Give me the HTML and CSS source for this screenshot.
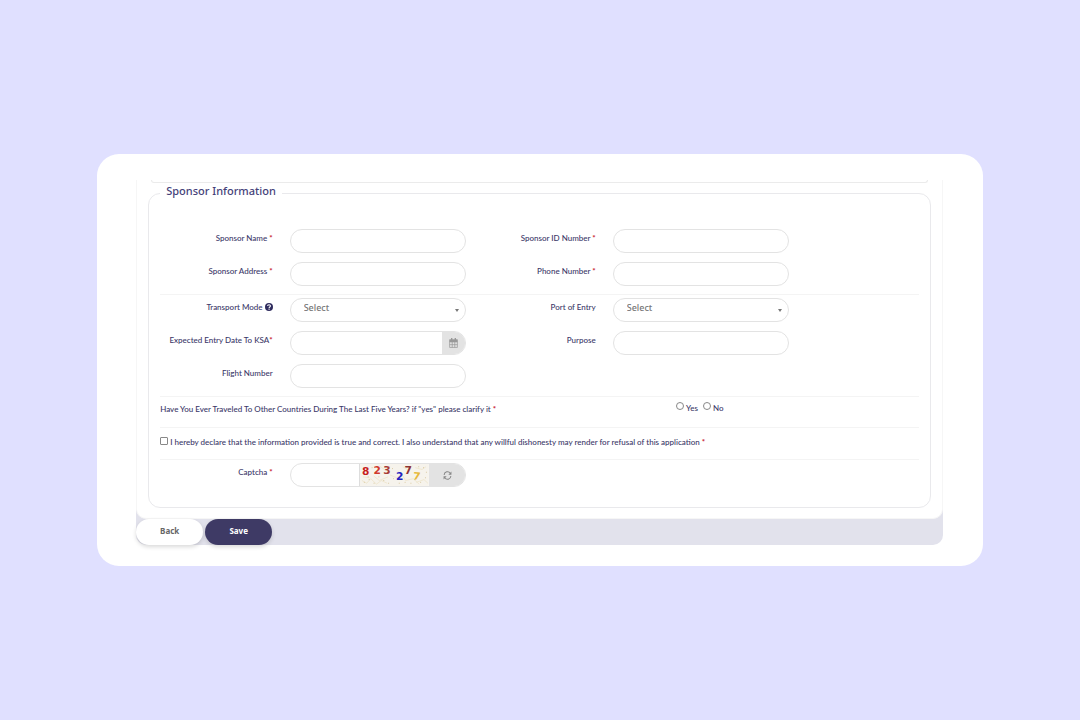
FILE: index.html
```html
<!DOCTYPE html>
<html lang="en">
<head>
    <meta charset="UTF-8">
    <meta name="viewport" content="width=device-width, initial-scale=1.0">
    <title>Sponsor Information</title>
    <link rel="stylesheet" href="styles.css">
</head>
<body>
    <main class="card">
        <form class="form-wrapper">
            <div class="panel">
                <div class="previous-section"></div>
                <fieldset class="section">
                    <legend>Sponsor Information</legend>

                    <div class="form-grid">
                        <label for="sponsor-name">Sponsor Name <span class="required">*</span></label>
                        <input type="text" id="sponsor-name" class="field">
                        <label for="sponsor-id">Sponsor ID Number <span class="required">*</span></label>
                        <input type="text" id="sponsor-id" class="field">

                        <label for="sponsor-address" class="first">Sponsor Address <span class="required">*</span></label>
                        <input type="text" id="sponsor-address" class="field">
                        <label for="phone">Phone Number <span class="required">*</span></label>
                        <input type="text" id="phone" class="field">
                    </div>

                    <div class="form-grid divided">
                        <label for="transport">Transport Mode
                            <svg class="help-icon" viewBox="0 0 16 16" aria-hidden="true">
                                <circle cx="8" cy="8" r="8" fill="#2f2c5e"/>
                                <path d="M5.2 6.2C5.3 2.8 10.8 2.8 10.8 6.1C10.8 8.1 8.2 8.1 8.2 10" fill="none" stroke="#fff" stroke-width="2.2"/>
                                <rect x="7" y="11.2" width="2.4" height="2.2" fill="#fff"/>
                            </svg>
                        </label>
                        <div class="select-box">
                            <select id="transport" class="field">
                                <option>Select</option>
                            </select>
                        </div>
                        <label for="port">Port of Entry</label>
                        <div class="select-box">
                            <select id="port" class="field">
                                <option>Select</option>
                            </select>
                        </div>

                        <label for="entry-date" class="first">Expected Entry Date To KSA<span class="required">*</span></label>
                        <div class="input-group">
                            <input type="text" id="entry-date">
                            <button type="button" class="date-btn" aria-label="Choose date">
                                <svg viewBox="0 0 16 18" width="9" height="10">
                                    <path d="M1 3H15V17H1Z M1 7H15 M5.7 7V17 M10.3 7V17 M1 12H15" fill="none" stroke="#999" stroke-width="1.3"/>
                                    <path d="M1 3H15V7H1Z M3.5 0H6V5H3.5Z M10 0H12.500V5H10Z" fill="#999"/>
                                </svg>
                            </button>
                        </div>
                        <label for="purpose">Purpose</label>
                        <input type="text" id="purpose" class="field">

                        <label for="flight" class="first">Flight Number</label>
                        <input type="text" id="flight" class="field">
                    </div>

                    <div class="question divided">
                        <p id="travel-question">Have You Ever Traveled To Other Countries During The Last Five Years? if "yes" please clarify it <span class="required">*</span></p>
                        <div class="radios" role="radiogroup" aria-labelledby="travel-question">
                            <label><input type="radio" name="traveled" value="yes">Yes</label>
                            <label><input type="radio" name="traveled" value="no">No</label>
                        </div>
                    </div>

                    <div class="declaration divided">
                        <input type="checkbox" id="declare">
                        <label for="declare">I hereby declare that the information provided is true and correct. I also understand that any willful dishonesty may render for refusal of this application <span class="required">*</span></label>
                    </div>

                    <div class="form-grid divided">
                        <label for="captcha">Captcha <span class="required">*</span></label>
                        <div class="input-group">
                            <input type="text" id="captcha">
                            <svg class="captcha-image" viewBox="0 0 71 24" preserveAspectRatio="none" role="img" aria-label="Captcha code">
                                <rect width="71" height="24" fill="#f6f3ec"/>
                                <path d="M2 18l5 3l4-5l6 6l5-4l6 3M20 2l5 4l6-3M31 12l7 3l5-4l4 7l8-2l6 6M3 14l7 1M44 3l5 3l5-4M57 4l7 2l4-3M58 20l8-3l4 4M14 13l6 5l9-4" fill="none" stroke="#efe7cf" stroke-width="1"/>
                                <path d="M4 20h1M9 17h1M14 21h1M19 14h1M24 18h1M29 21h1M34 16h1M33 5h1M40 21h1M39 9h1M46 20h1M52 21h1M56 17h1M62 20h1M67 15h1M65 4h1M60 3h1M12 4h1M8 14h1M68 9h1" stroke="#d9c9a0"/>
                                <g class="captcha-digits">
                                    <text x="2" y="12" fill="#c8201c">8</text>
                                    <text x="14" y="11" fill="#d03a2c">2</text>
                                    <text x="24" y="11" fill="#a83c38">3</text>
                                    <text x="37" y="18" fill="#2424c0">2</text>
                                    <text x="46" y="11" fill="#8f3434">7</text>
                                    <text x="55" y="17" fill="#e6b93c" transform="rotate(6 59 12)">7</text>
                                </g>
                            </svg>
                            <button type="button" class="refresh-btn" aria-label="Refresh captcha">
                                <svg viewBox="0 0 16 16" width="9" height="9">
                                    <path d="M2 7A6 6 0 0 1 13 4M14 9A6 6 0 0 1 3 12" fill="none" stroke="#888" stroke-width="1.8"/>
                                    <path d="M15 1V6.500H9.500Z M1 15V9.500H6.500Z" fill="#888"/>
                                </svg>
                            </button>
                        </div>
                    </div>
                </fieldset>
            </div>
            <div class="actions">
                <button type="button" class="btn back-btn">Back</button>
                <button type="submit" class="btn save-btn">Save</button>
            </div>
        </form>
    </main>
</body>
</html>
```
FILE: styles.css
```css
* {
    box-sizing: border-box;
}

body {
    margin: 0;
    min-height: 100vh;
    display: flex;
    align-items: center;
    justify-content: center;
    background-color: #e0e0ff;
    color: #3a3768;
    font-family: Lato, "Noto Sans", sans-serif;
    font-size: 8px;
    font-weight: 500;
    line-height: 10px;
}

input,
select,
button {
    margin: 0;
    font-family: "Noto Sans", sans-serif;
}

.card {
    width: 82%;
    padding: 26px 40px 21px 39px;
    background-color: #fff;
    border-radius: 22px;
}

.form-wrapper {
    background-color: #e2e2ec;
    border-radius: 0 0 10px 10px;
}

.panel {
    padding: 0 11px 10px;
    background-color: #fff;
    border: 1px solid #f6f6f6;
    border-top: none;
    border-radius: 0 0 10px 10px;
}

/* bottom edge of the section above */
.previous-section {
    height: 3px;
    margin: 0 3px;
    border: 1px solid #ebebeb;
    border-top: none;
    border-radius: 0 0 8px 8px;
}

.section {
    min-width: 0;
    margin: 1px 0 0;
    padding: 26px 11px 20px;
    border: 1px solid #e9e9ec;
    border-radius: 12px;
}

legend {
    padding: 0 6px 5px;
    color: #45427a;
    font-family: "Noto Sans", sans-serif;
    font-size: 11px;
    line-height: 14px;
}

.required {
    color: #c8202f;
    font-weight: bold;
}

.form-grid {
    display: grid;
    grid-template-columns: 14fr 22fr 14fr 22fr 14fr;
    gap: 9px 17px;
}

.form-grid > label {
    padding-top: 4px;
    text-align: right;
    white-space: nowrap;
}

.form-grid .first {
    grid-column: 1;
}

.divided {
    border-top: 1px solid #f4f4f4;
}

.form-grid.divided {
    padding-top: 3px;
}

.form-grid:has(+ .divided) {
    padding-bottom: 8px;
}

.field,
.input-group {
    width: 100%;
    height: 24px;
    background-color: #fff;
    border: 1px solid #e3e3e3;
    border-radius: 12px;
}

.field {
    padding: 0 13px;
    font-size: 9px;
}

.select-box {
    position: relative;
}

.select-box select {
    display: block;
    padding-bottom: 5px;
    appearance: none;
    color: #777;
    font-weight: 500;
}

.select-box::after {
    content: "";
    position: absolute;
    top: 11px;
    right: 7px;
    border: 2px solid transparent;
    border-top: 3px solid #777;
    border-bottom: none;
}

.help-icon {
    width: 8px;
    height: 8px;
    vertical-align: -1px;
}

.input-group {
    display: flex;
    overflow: hidden;
}

.input-group input {
    flex: 1;
    min-width: 0;
    padding: 0 12px;
    border: none;
    background-color: transparent;
    font-size: 9px;
}

.input-group button {
    display: flex;
    align-items: center;
    justify-content: center;
    padding: 0;
    border: none;
    background-color: #e3e3e3;
}

.date-btn {
    width: 23px;
}

.refresh-btn {
    width: 36px;
}

.captcha-image {
    flex: 0 0 40%;
    height: 100%;
    border-left: 1px solid #ddd;
}

.captcha-digits {
    font-family: "DejaVu Sans", sans-serif;
    font-size: 11px;
    font-weight: bold;
}

.question {
    display: flex;
    height: 31px;
}

.question p {
    width: 68%;
    margin: 0;
    padding-top: 7px;
}

.radios {
    display: flex;
    gap: 5px;
    padding-top: 5px;
}

.radios label {
    display: flex;
    align-items: flex-start;
    gap: 2px;
    line-height: 12px;
}

.radios input,
.declaration input {
    flex: none;
    width: 8px;
    height: 8px;
    appearance: none;
    background-color: #fff;
    border: 1px solid #888;
    border-radius: 1px;
}

.radios input {
    border-radius: 50%;
}

.radios input:checked,
.declaration input:checked {
    background-color: #3e3a65;
}

.declaration {
    display: flex;
    align-items: flex-start;
    gap: 2px;
    height: 32px;
    padding-top: 9px;
}

.actions {
    display: flex;
    gap: 2px;
}

.btn {
    width: 67px;
    height: 26px;
    padding: 0 0 4px;
    border: none;
    border-radius: 13px;
    font-size: 8px;
    font-weight: bold;
    cursor: pointer;
    box-shadow: 0 2px 4px rgba(0, 0, 0, 0.15);
}

.back-btn {
    background-color: #fff;
    color: #666;
}

.save-btn {
    background-color: #3e3a65;
    color: #fff;
}
```
